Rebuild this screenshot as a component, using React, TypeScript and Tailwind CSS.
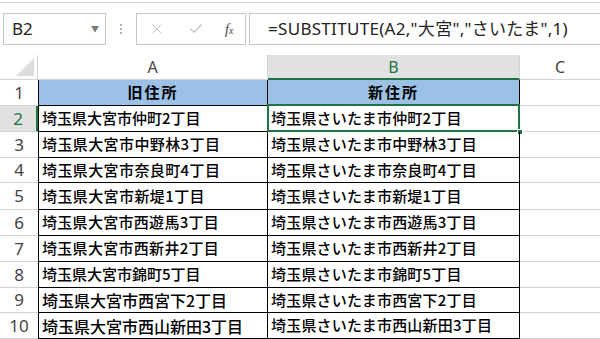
import { X, Check } from "lucide-react";

const rows = [
  { n: 1, a: "旧住所", b: "新住所", h: "h-[26px]", aText: "" },
  { n: 2, a: "埼玉県大宮市仲町2丁目", b: "埼玉県さいたま市仲町2丁目", h: "h-[26px]", aText: "text-[15px]" },
  { n: 3, a: "埼玉県大宮市中野林3丁目", b: "埼玉県さいたま市中野林3丁目", h: "h-[26px]", aText: "text-[15px] tracking-[0.4px]" },
  { n: 4, a: "埼玉県大宮市奈良町4丁目", b: "埼玉県さいたま市奈良町4丁目", h: "h-[25px]", aText: "text-[15px] tracking-[0.4px]" },
  { n: 5, a: "埼玉県大宮市新堤1丁目", b: "埼玉県さいたま市新堤1丁目", h: "h-[27px]", aText: "text-[15px] tracking-[0.4px]" },
  { n: 6, a: "埼玉県大宮市西遊馬3丁目", b: "埼玉県さいたま市西遊馬3丁目", h: "h-[26px]", aText: "text-[15px] tracking-[0.3px]" },
  { n: 7, a: "埼玉県大宮市西新井2丁目", b: "埼玉県さいたま市西新井2丁目", h: "h-[26px]", aText: "text-[15px] tracking-[0.3px]" },
  { n: 8, a: "埼玉県大宮市錦町5丁目", b: "埼玉県さいたま市錦町5丁目", h: "h-[26px]", aText: "text-[15px]" },
  { n: 9, a: "埼玉県大宮市西宮下2丁目", b: "埼玉県さいたま市西宮下2丁目", h: "h-[25px]", aText: "text-[16px]" },
  { n: 10, a: "埼玉県大宮市西山新田3丁目", b: "埼玉県さいたま市西山新田3丁目", h: "h-[26px]", aText: "text-[16px]" },
];

export default function App() {
  return (
    <div className="w-[600px] h-[339px] overflow-hidden bg-white font-['Noto_Sans','Noto_Sans_CJK_JP',sans-serif] text-black">
      {/* formula bar */}
      <div className="pt-[2px]">
        <div className="border-t border-[#d6d6d6] pt-[10px] h-[53px]">
          <div className="flex h-[32px]">
            <div className="ml-[3px] w-[103px] border border-[#c6c6c6] flex items-center justify-between pl-[8px] pr-[6px]">
              <span className="text-[17px] text-[#222]">B2</span>
              <span className="text-[8px] text-[#777]">▼</span>
            </div>
            <div className="w-[30px] flex flex-col items-center justify-center gap-[2px]">
              <span className="w-[2px] h-[2px] bg-[#b5b5b5]" />
              <span className="w-[2px] h-[2px] bg-[#b5b5b5]" />
              <span className="w-[2px] h-[2px] bg-[#b5b5b5]" />
            </div>
            <div className="w-[110px] border border-[#c6c6c6] flex items-center pl-[12px]">
              <X size={16} strokeWidth={1.5} className="text-[#c4c4c4]" />
              <Check size={16} strokeWidth={2} className="text-[#c4c4c4] ml-[23px]" />
              <span className="ml-[21px] italic font-['Liberation_Serif',serif] text-[14px] text-[#444]">
                f<span className="text-[10px]">x</span>
              </span>
            </div>
            <div className="ml-[3px] flex-1 border-y border-l border-[#c6c6c6] flex items-center pl-[18px]">
              <span className="text-[17px] tracking-[0.3px] text-[#222] whitespace-nowrap">=SUBSTITUTE(A2,"大宮","さいたま",1)</span>
            </div>
          </div>
        </div>
      </div>

      {/* sheet */}
      <div className="grid grid-cols-[38px_230px_252px_80px]">
        <div className="h-[25px] relative border-r border-b border-[#d4d4d4]">
          <svg className="absolute right-[3px] bottom-[3px]" width="18" height="18" viewBox="0 0 18 18">
            <polygon points="18,0 18,18 0,18" fill="#dcdcdc" />
          </svg>
        </div>
        <div className="h-[25px] border-r border-b border-[#d4d4d4] flex items-center justify-center text-[16px] text-[#444]">A</div>
        <div className="h-[25px] bg-[#e1e1e1] border-r border-[#d4d4d4] border-b-2 border-b-[#217346] flex items-center justify-center text-[16px] text-[#217346]">B</div>
        <div className="h-[25px] border-b border-[#d4d4d4] flex items-center justify-center text-[16px] text-[#444]">C</div>

        {rows.map((r) => {
          const head = r.n === 1;
          const sel = r.n === 2;
          return (
            <div key={r.n} className="contents">
              <div
                className={`${r.h} border-b border-[#d4d4d4] flex items-center justify-center text-[17px] ${
                  sel ? "bg-[#e1e1e1] text-[#217346] border-r-2 border-r-[#217346]" : "text-[#444]"
                }`}
              >
                {r.n}
              </div>
              <div
                className={`${r.h} border-l border-r border-b border-black flex items-center font-['Noto_Sans_CJK_JP',sans-serif] ${
                  head ? "bg-[#9bc2e6] justify-center font-bold text-[15px] tracking-[2px]" : `pl-[3px] font-medium ${r.aText}`
                }`}
              >
                {r.a}
              </div>
              <div
                className={`${r.h} relative border-r border-b border-black flex items-center font-['Noto_Sans_CJK_JP',sans-serif] text-[15px] ${
                  head ? "bg-[#9bc2e6] justify-center font-bold tracking-[2px]" : "pl-[3px] font-medium tracking-[0.2px]"
                }`}
              >
                {r.b}
                {sel && (
                  <>
                    <div className="absolute -left-[1px] -top-[2px] -right-[1px] -bottom-[1px] border-2 border-[#217346]" />
                    <div className="absolute -right-[4px] -bottom-[4px] w-[6px] h-[6px] bg-[#217346] border border-white" />
                  </>
                )}
              </div>
              <div className={`${r.h} border-b border-[#d4d4d4]`} />
            </div>
          );
        })}
      </div>
    </div>
  );
}
